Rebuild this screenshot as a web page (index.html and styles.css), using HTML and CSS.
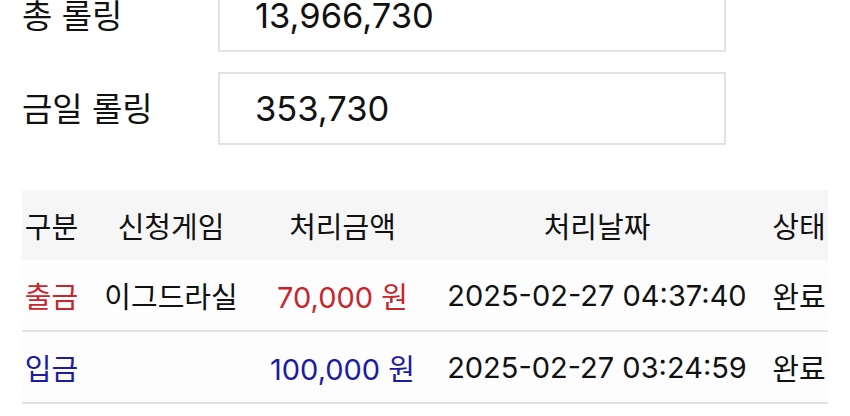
FILE: index.html
```
<!DOCTYPE html>
<html lang="ko">
<head>
<meta charset="utf-8">
<link rel="stylesheet" href="styles.css">
</head>
<body>
<div class="page">
  <div class="summary">
    <div class="field">
      <span class="field-label">총 롤링</span>
      <div class="field-box">13,966,730</div>
    </div>
    <div class="field">
      <span class="field-label">금일 롤링</span>
      <div class="field-box">353,730</div>
    </div>
  </div>
  <table class="history">
    <colgroup>
      <col class="c-type"><col class="c-game"><col class="c-amount"><col class="c-date"><col class="c-state">
    </colgroup>
    <thead>
      <tr><th>구분</th><th>신청게임</th><th>처리금액</th><th>처리날짜</th><th>상태</th></tr>
    </thead>
    <tbody>
      <tr class="out"><td class="kind">출금</td><td>이그드라실</td><td class="money">70,000 원</td><td>2025-02-27 04:37:40</td><td>완료</td></tr>
      <tr class="in"><td class="kind">입금</td><td></td><td class="money">100,000 원</td><td>2025-02-27 03:24:59</td><td>완료</td></tr>
    </tbody>
  </table>
</div>
</body>
</html>
```
FILE: styles.css
```
html, body {
  margin: 0;
  padding: 0;
  background: #fff;
}
body {
  font-family: Inter, "Noto Sans CJK KR", sans-serif;
  color: #111;
  overflow: hidden;
}
.page {
  padding-left: 22px;
  margin-top: -21px;
}
.summary {
  display: flex;
  flex-direction: column;
  gap: 20px;
}
.field {
  display: flex;
  align-items: center;
}
.field-label {
  width: 196px;
  font-size: 33px;
  line-height: 30px;
  flex: none;
}
.field-box {
  box-sizing: border-box;
  width: 508px;
  height: 73px;
  border: 2px solid #e2e2e2;
  padding-left: 35px;
  display: flex;
  align-items: center;
  font-size: 34.5px;
  line-height: 30px;
}
.history {
  margin-top: 45px;
  width: 806px;
  border-collapse: collapse;
  table-layout: fixed;
  font-size: 29px;
}
.c-type { width: 59px; }
.c-game { width: 180px; }
.c-amount { width: 163px; }
.c-date { width: 346px; }
.c-state { width: 58px; }
.history th {
  background: #f6f6f6;
  font-weight: 400;
  height: 70px;
  padding: 0;
  text-align: center;
  white-space: nowrap;
}
.history td {
  height: 70px;
  padding: 0;
  text-align: center;
  white-space: nowrap;
  border-bottom: 2px solid #e2e2e2;
  background: #fdfdfe;
}
.out .kind, .out .money { color: #c8262c; }
.in .kind, .in .money { color: #1c1ca0; }
```
